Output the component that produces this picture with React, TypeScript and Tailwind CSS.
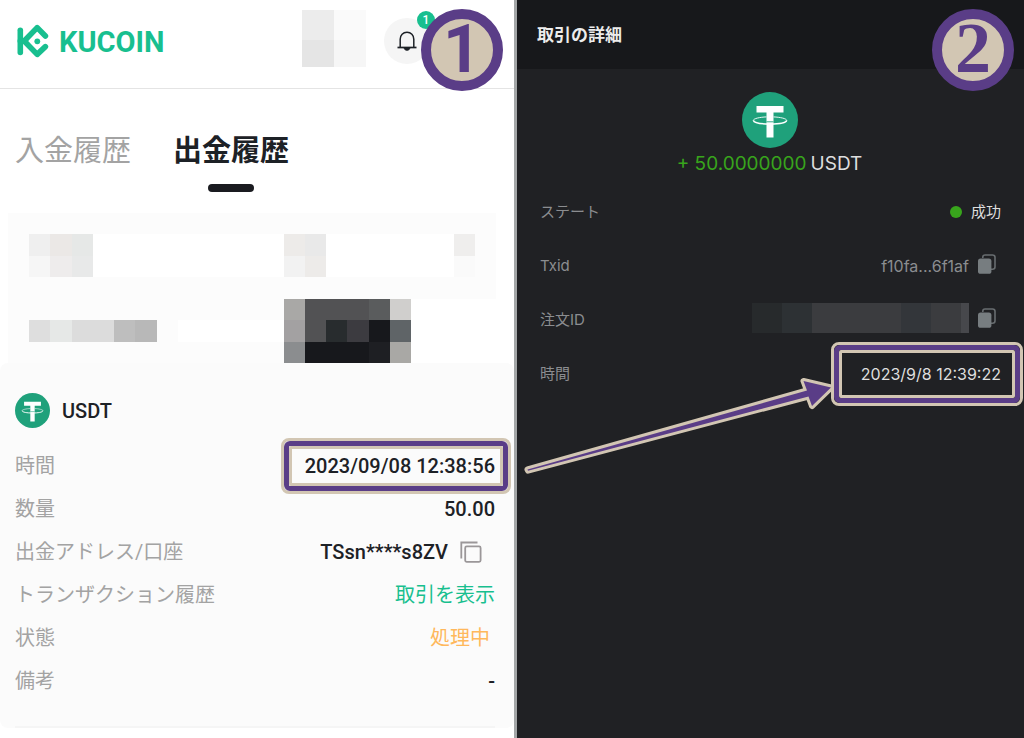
import React from 'react';

const LIGHT_FONT = "font-[Roboto,'Noto_Sans_CJK_JP',sans-serif]";
const DARK_FONT = "font-[Inter,'Noto_Sans_CJK_JP',sans-serif]";

// Redacted area, [column, row, width, height, fill] on a 23 x 7 cell grid
const redactedCells: [number, number, number, number, string][] = [
  [4, 1, 17, 2, '#ffffff'],
  [1, 1, 1, 1, '#efefef'],
  [2, 1, 1, 1, '#ebe8e6'],
  [3, 1, 1, 1, '#e6e8e7'],
  [1, 2, 1, 1, '#f6f6f6'],
  [2, 2, 1, 1, '#eeecec'],
  [3, 2, 1, 1, '#e8e9e9'],
  [13, 1, 1, 1, '#edebe9'],
  [14, 1, 1, 1, '#e9e9e9'],
  [13, 2, 1, 1, '#f2f2f2'],
  [14, 2, 1, 1, '#edebe9'],
  [21, 1, 1, 1, '#efeeed'],
  [21, 2, 1, 1, '#fafafa'],
  [19, 4, 4, 3, '#ffffff'],
  [8, 5, 5, 1, '#ffffff'],
  [1, 5, 1, 1, '#dedede'],
  [2, 5, 1, 1, '#e6e8e7'],
  [3, 5, 2, 1, '#dcdcdc'],
  [5, 5, 1, 1, '#bebebe'],
  [6, 5, 1, 1, '#b8b8b8'],
  [13, 4, 1, 1, '#a9a8a6'],
  [14, 4, 3, 1, '#525254'],
  [17, 4, 1, 1, '#5a5c5d'],
  [18, 4, 1, 1, '#d0cfcd'],
  [13, 5, 1, 1, '#a3a1a2'],
  [14, 5, 1, 1, '#525254'],
  [15, 5, 1, 1, '#282c2e'],
  [16, 5, 1, 1, '#3c3b40'],
  [17, 5, 1, 1, '#17181c'],
  [18, 5, 1, 1, '#5f6467'],
  [13, 6, 1, 1, '#8b8d8f'],
  [14, 6, 3, 1, '#17181c'],
  [17, 6, 1, 1, '#1e1f23'],
  [18, 6, 1, 1, '#a9a8a5'],
];

function KucoinMark() {
  return (
    <svg viewBox="0 0 32 34" className="h-[34px] w-8" fill="none" stroke="#18bf8f" strokeWidth="5.6" strokeLinecap="round" strokeLinejoin="round" aria-hidden="true">
      <path d="M3.3 6.3V28.5" />
      <path d="M28.4 12L20.2 3.6L7.2 17L20.2 30.4L28.4 22.6" />
      <path d="M3.3 17H8.5" />
      <circle cx="20.3" cy="17.3" r="2.9" fill="#18bf8f" stroke="none" />
    </svg>
  );
}

function TetherIcon({ className }: { className: string }) {
  return (
    <svg viewBox="0 0 56 56" className={className} aria-hidden="true">
      <circle cx="28" cy="28" r="28" fill="#1fa17b" />
      <path d="M14.5 14h27v6.5h-10v25h-7v-25h-10z" fill="#fff" />
      <path d="M24.5 29.8h7" stroke="#1fa17b" strokeWidth="0.9" />
      <path d="M11.2 28.7C11.2 26.4 18 25.2 24.5 24.9M31.5 24.9C38 25.2 44.8 26.4 44.8 28.7" fill="none" stroke="#fff" strokeWidth="0.9" />
      <path d="M11.4 28.5C12 30.8 19 32 28 32S44 30.8 44.6 28.5" fill="none" stroke="#fff" strokeWidth="1.5" />
    </svg>
  );
}

function BellIcon() {
  return (
    <svg viewBox="0 0 20 20" className="size-5" fill="none" stroke="#1d2126" strokeWidth="1.5" aria-hidden="true">
      <path d="M3.2 16V8.2C3.2 4.2 6 1.3 10 1.3S16.8 4.2 16.8 8.2V16" />
      <path d="M.5 16.5H19.5" strokeWidth="1.7" />
      <path d="M7 17C7.4 20.3 12.6 20.3 13 17Z" fill="#1d2126" strokeWidth="0.6" />
    </svg>
  );
}

function CopyOutlineIcon() {
  return (
    <svg viewBox="0 0 22 22" className="size-[22px]" fill="none" stroke="#9b9799" strokeWidth="1.8" aria-hidden="true">
      <path d="M1.3 17.5V1.5H17.5" />
      <rect x="5.2" y="5.4" width="15.4" height="15.4" rx="1.5" />
    </svg>
  );
}

function CopyFilledIcon() {
  return (
    <svg viewBox="0 0 18 20" className="h-5 w-[18px]" aria-hidden="true">
      <path d="M4.8 4V3.2C4.8 1.9 5.7 1 7 1H14.6C16 1 17 2 17 3.3V12.8C17 14.2 16 15.2 14.6 15.2H13" fill="none" stroke="#686d70" strokeWidth="1.6" />
      <rect x="0" y="4.6" width="13.4" height="15.2" rx="2.6" fill="#777d80" />
    </svg>
  );
}

function StepBadge({ children, className }: { children: React.ReactNode; className: string }) {
  return (
    <div className={`absolute z-10 flex size-[82px] items-center justify-center rounded-full border-[10px] border-[#5a3d87] bg-[#d2c6b3] leading-none text-[#5a3d87] ${className}`}>
      {children}
    </div>
  );
}

function HighlightBox({ className }: { className: string }) {
  return (
    <span aria-hidden="true" className={`pointer-events-none absolute rounded-lg border-3 border-[#d2c6b3] ${className}`}>
      <span className="block h-full rounded-md border-5 border-[#5a3d87]">
        <span className="block h-full rounded-xs border-3 border-[#d2c6b3]" />
      </span>
    </span>
  );
}

function Row({ label, children }: { label: string; children: React.ReactNode }) {
  return (
    <div className="flex h-[43px] items-center justify-between">
      <dt className="text-[#a3a3a3]">{label}</dt>
      <dd className="font-medium text-[#1d2126]">{children}</dd>
    </div>
  );
}

function DarkRow({ label, children }: { label: string; children: React.ReactNode }) {
  return (
    <div className="flex h-[54px] items-center justify-between">
      <dt className="text-[#8b8d90]">{label}</dt>
      <dd className="flex items-center text-[#dedede]">{children}</dd>
    </div>
  );
}

function WithdrawalPanel() {
  return (
    <section className={`relative border-r-3 border-[#a3a6a7] bg-white ${LIGHT_FONT}`}>
      <header className="flex h-[89px] items-center border-b border-[#e4e4e4] pr-[84px] pb-1.5 pl-[17px]">
        <a href="#" className="flex items-center gap-2.5">
          <KucoinMark />
          <span className="pt-0.5 text-[29px] leading-none font-bold text-[#18bf8f]">KUCOIN</span>
        </a>
        <div className="mb-1.5 ml-auto grid h-[57px] w-16 grid-cols-2 grid-rows-[30px_27px]" aria-hidden="true">
          <div className="bg-[#ececec]" />
          <div className="bg-[#fafafa]" />
          <div className="bg-[#e5e5e5]" />
          <div className="bg-[#f6f6f6]" />
        </div>
        <button type="button" aria-label="通知" className="relative ml-[18px] flex size-[46px] items-center justify-center rounded-full bg-[#f5f5f5]">
          <BellIcon />
          <span className="absolute -top-[7px] -right-[5px] flex size-[18px] items-center justify-center rounded-full bg-[#18bf8f] text-xs leading-none font-medium text-white">1</span>
        </button>
      </header>
      <StepBadge className="top-[9px] right-[11px] font-[Roboto,sans-serif] text-[66px] font-bold">1</StepBadge>

      <nav className="flex gap-[42px] px-[15px] pt-[41px] text-[29px] leading-[42px]">
        <button type="button" className="self-start text-[#a3a3a3]">入金履歴</button>
        <button type="button" className="flex flex-col items-center gap-3 font-bold text-[#1d2126]">
          出金履歴
          <span className="h-2 w-[46px] rounded-full bg-[#1a1b20]" />
        </button>
      </nav>

      <svg viewBox="0 0 23 7" preserveAspectRatio="none" shapeRendering="crispEdges" className="mt-[21px] h-[150px] w-full pr-[18px] pl-2" aria-hidden="true">
        <rect width="23" height="7" fill="#fcfcfc" />
        {redactedCells.map(([x, y, w, h, fill]) => (
          <rect key={`${x}-${y}`} x={x} y={y} width={w} height={h} fill={fill} />
        ))}
      </svg>

      <div className="rounded-lg bg-[#fbfbfb] pr-[19px] pl-[15px]">
        <div className="flex items-center gap-3 pt-[30px] pb-4">
          <TetherIcon className="size-[35px]" />
          <h2 className="text-xl font-medium text-[#1d2126]">USDT</h2>
        </div>
        <dl className="border-b-2 border-[#f5f5f5] pb-6 text-xl">
          <Row label="時間">
            <span className="relative block">
              <HighlightBox className="-inset-y-3.5 -right-4 -left-6" />
              2023/09/08 12:38:56
            </span>
          </Row>
          <Row label="数量">50.00</Row>
          <Row label="出金アドレス/口座">
            <span className="flex items-center gap-3 pr-[13px]">
              TSsn****s8ZV
              <button type="button" aria-label="コピー"><CopyOutlineIcon /></button>
            </span>
          </Row>
          <Row label="トランザクション履歴">
            <a href="#" className="font-normal text-[#18bf8f]">取引を表示</a>
          </Row>
          <Row label="状態">
            <span className="pr-[5px] font-normal text-[#ffb85c]">処理中</span>
          </Row>
          <Row label="備考">-</Row>
        </dl>
      </div>
    </section>
  );
}

function DetailPanel() {
  return (
    <section className={`relative bg-[#202124] ${DARK_FONT}`}>
      <header className="flex h-[69px] items-center bg-[#17181b] px-5 pt-0.5">
        <h1 className="text-[17px] font-bold text-[#ececec]">取引の詳細</h1>
      </header>
      <StepBadge className="top-[9px] right-[10px] pb-1 font-['Liberation_Serif',serif] text-[72px] font-bold">2</StepBadge>

      <div className="flex flex-col items-center pr-0.5 pt-[23px]">
        <TetherIcon className="size-14" />
        <p className="flex gap-1 pt-0.5 text-[19px] leading-7 text-[#dedede]">
          <span className="text-[#38a51c]">+ 50.0000000</span>
          USDT
        </p>
      </div>

      <dl className="pt-[7px] pr-[23px] pl-[23px] text-[15px]">
        <DarkRow label="ステート">
          <span className="mr-[9px] size-3 rounded-full bg-[#38a51c]" />
          成功
        </DarkRow>
        <DarkRow label="Txid">
          <span className="text-base text-[#8b8d90]">f10fa...6f1af</span>
          <button type="button" aria-label="Txidをコピー" className="mr-[5px] mb-1 ml-[9px]"><CopyFilledIcon /></button>
        </DarkRow>
        <DarkRow label="注文ID">
          <span className="mb-1 flex h-[30px] w-[217px]" aria-hidden="true">
            <span className="w-[30px] bg-[#272a2c]" />
            <span className="w-[30px] bg-[#2d3134]" />
            <span className="grow bg-[#3b3c3f]" />
            <span className="w-[30px] bg-[#33363a]" />
            <span className="w-[30px] bg-[#3b3c3f]" />
            <span className="w-2 bg-[#47484c]" />
          </span>
          <button type="button" aria-label="注文IDをコピー" className="mr-[5px] mb-1 ml-[9px]"><CopyFilledIcon /></button>
        </DarkRow>
        <DarkRow label="時間">
          <span className="relative block text-base">
            <HighlightBox className="-inset-y-5 -right-[22px] -left-[30px]" />
            2023/9/8 12:39:22
          </span>
        </DarkRow>
      </dl>

      <svg viewBox="520 374 316 104" className="pointer-events-none absolute top-[374px] left-[3px] w-[316px]" aria-hidden="true">
        <path d="M527.5 469.5L807 390.5L803.5 381L831 387.5L812 406L808.5 396.5L528 470.7Z" fill="#5a3d87" stroke="#d2c6b3" strokeWidth="6" strokeLinejoin="round" paintOrder="stroke" />
      </svg>
    </section>
  );
}

export default function App() {
  return (
    <main className="grid min-h-screen grid-cols-[517fr_507fr]">
      <WithdrawalPanel />
      <DetailPanel />
    </main>
  );
}
